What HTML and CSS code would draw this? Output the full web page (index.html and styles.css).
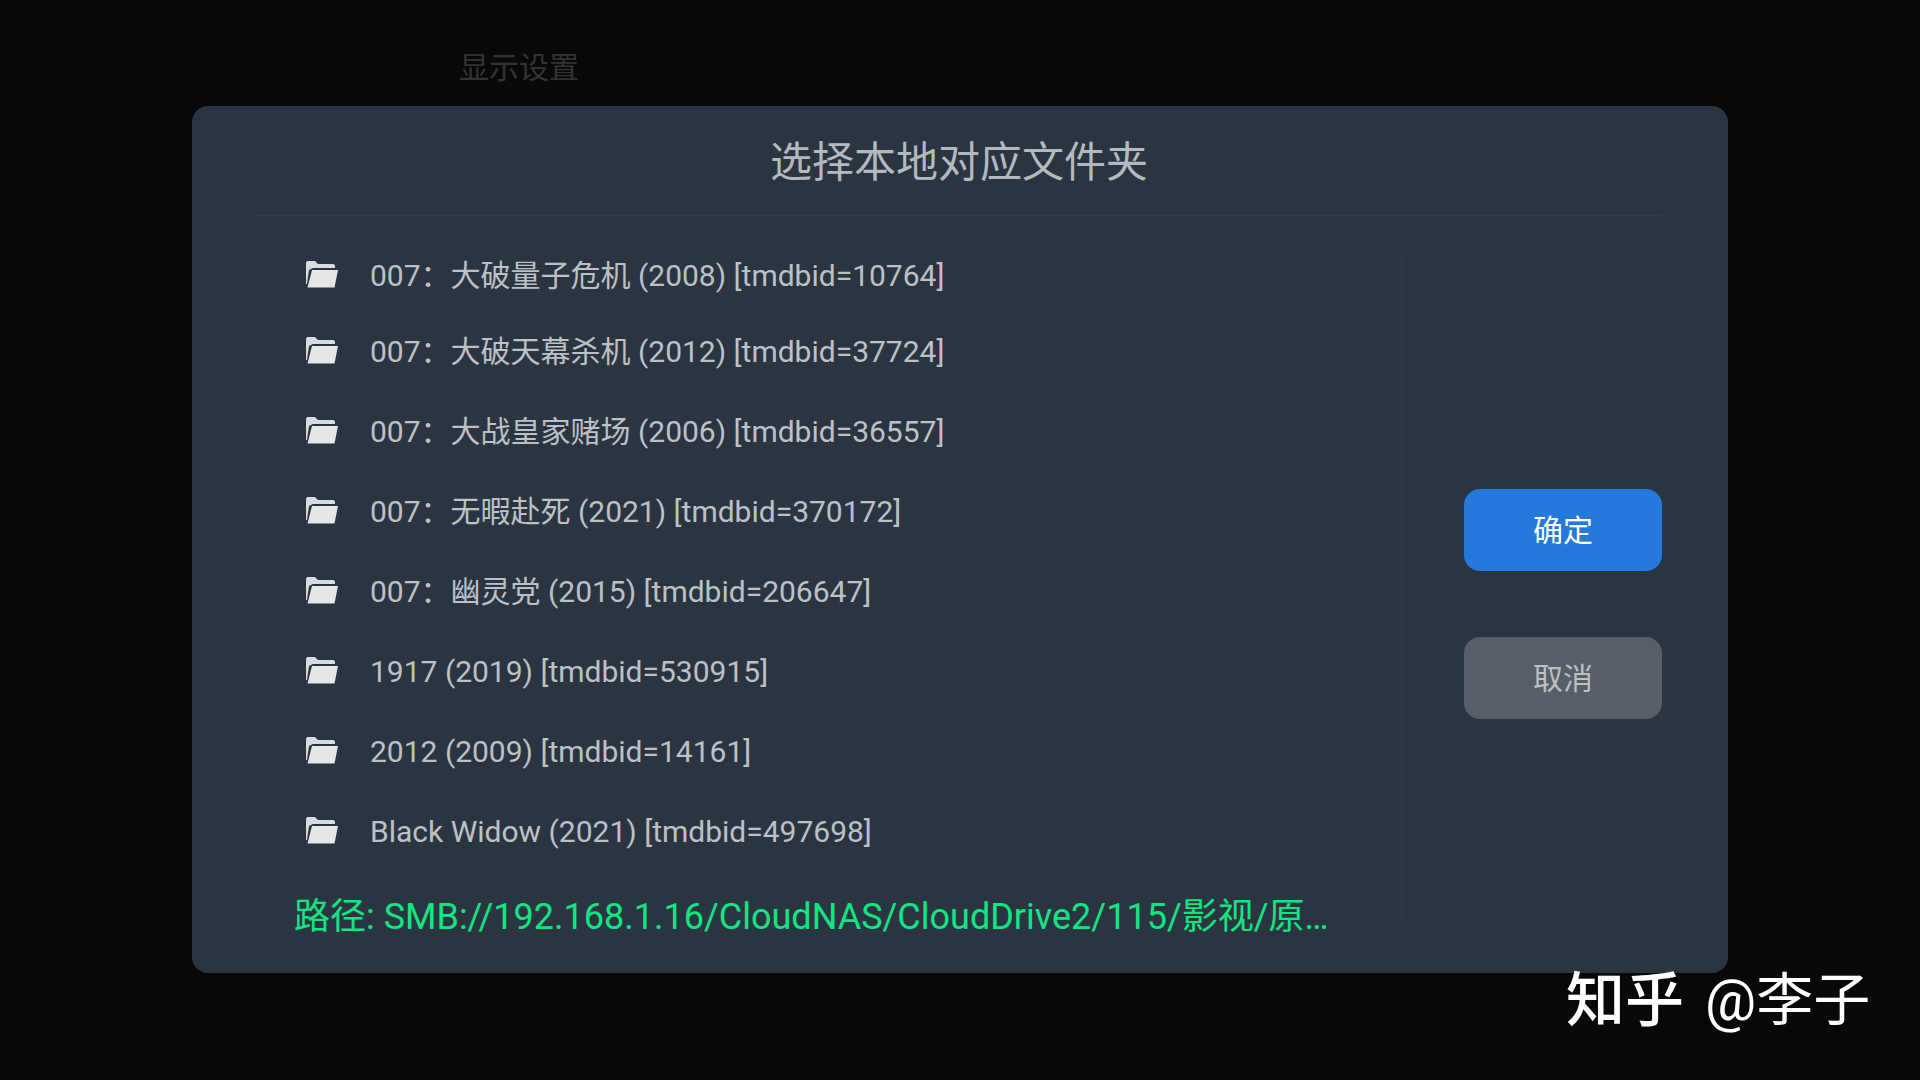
FILE: index.html
```html
<!DOCTYPE html>
<html lang="zh-CN">
<head>
<meta charset="UTF-8">
<title>选择本地对应文件夹</title>
<link rel="stylesheet" href="styles.css">
</head>
<body>
<p class="behind-title">显示设置</p>
<div class="dialog">
    <div class="behind-box"></div>
    <h1 class="dialog-title">选择本地对应文件夹</h1>
    <div class="dialog-body">
        <div class="browser">
            <ul class="folder-list">
                <li class="folder-row"><svg class="folder-icon" viewBox="0 0 32 28"><path class="folder-back" d="M0 3a2 2 0 0 1 2-2h7l3 3h15a2 2 0 0 1 2 2v2H7L3 10 1 24H0z"/><path class="folder-front" d="M6 10h26l-3.500 17.500H1.500z"/></svg><span class="folder-name">007：大破量子危机 (2008) [tmdbid=10764]</span></li>
                <li class="folder-row"><svg class="folder-icon" viewBox="0 0 32 28"><path class="folder-back" d="M0 3a2 2 0 0 1 2-2h7l3 3h15a2 2 0 0 1 2 2v2H7L3 10 1 24H0z"/><path class="folder-front" d="M6 10h26l-3.500 17.500H1.500z"/></svg><span class="folder-name">007：大破天幕杀机 (2012) [tmdbid=37724]</span></li>
                <li class="folder-row"><svg class="folder-icon" viewBox="0 0 32 28"><path class="folder-back" d="M0 3a2 2 0 0 1 2-2h7l3 3h15a2 2 0 0 1 2 2v2H7L3 10 1 24H0z"/><path class="folder-front" d="M6 10h26l-3.500 17.500H1.500z"/></svg><span class="folder-name">007：大战皇家赌场 (2006) [tmdbid=36557]</span></li>
                <li class="folder-row"><svg class="folder-icon" viewBox="0 0 32 28"><path class="folder-back" d="M0 3a2 2 0 0 1 2-2h7l3 3h15a2 2 0 0 1 2 2v2H7L3 10 1 24H0z"/><path class="folder-front" d="M6 10h26l-3.500 17.500H1.500z"/></svg><span class="folder-name">007：无暇赴死 (2021) [tmdbid=370172]</span></li>
                <li class="folder-row"><svg class="folder-icon" viewBox="0 0 32 28"><path class="folder-back" d="M0 3a2 2 0 0 1 2-2h7l3 3h15a2 2 0 0 1 2 2v2H7L3 10 1 24H0z"/><path class="folder-front" d="M6 10h26l-3.500 17.500H1.500z"/></svg><span class="folder-name">007：幽灵党 (2015) [tmdbid=206647]</span></li>
                <li class="folder-row"><svg class="folder-icon" viewBox="0 0 32 28"><path class="folder-back" d="M0 3a2 2 0 0 1 2-2h7l3 3h15a2 2 0 0 1 2 2v2H7L3 10 1 24H0z"/><path class="folder-front" d="M6 10h26l-3.500 17.500H1.500z"/></svg><span class="folder-name">1917 (2019) [tmdbid=530915]</span></li>
                <li class="folder-row"><svg class="folder-icon" viewBox="0 0 32 28"><path class="folder-back" d="M0 3a2 2 0 0 1 2-2h7l3 3h15a2 2 0 0 1 2 2v2H7L3 10 1 24H0z"/><path class="folder-front" d="M6 10h26l-3.500 17.500H1.500z"/></svg><span class="folder-name">2012 (2009) [tmdbid=14161]</span></li>
                <li class="folder-row"><svg class="folder-icon" viewBox="0 0 32 28"><path class="folder-back" d="M0 3a2 2 0 0 1 2-2h7l3 3h15a2 2 0 0 1 2 2v2H7L3 10 1 24H0z"/><path class="folder-front" d="M6 10h26l-3.500 17.500H1.500z"/></svg><span class="folder-name">Black Widow (2021) [tmdbid=497698]</span></li>
            </ul>
            <p class="path">路径: SMB://192.168.1.16/CloudNAS/CloudDrive2/115/影视/原…</p>
        </div>
        <div class="divider"></div>
        <div class="actions">
            <button class="btn btn-primary">确定</button>
            <button class="btn">取消</button>
        </div>
    </div>
</div>
<p class="watermark"><b>知乎</b><span>@李子</span></p>
</body>
</html>
```

FILE: styles.css
```css
* {
    box-sizing: border-box;
}
body {
    margin: 0;
    height: 100vh;
    padding-top: 106px;
    padding-left: 192px;
    overflow: hidden;
    background-color: #080808;
    font-family: Roboto, "Noto Sans CJK SC", sans-serif;
}
p, h1, ul {
    margin: 0;
    padding: 0;
}
.behind-title {
    position: absolute;
    left: 459px;
    top: 47px;
    font-size: 30px;
    line-height: 42px;
    color: #333333;
}
.dialog {
    position: relative;
    width: 1536px;
    height: 867px;
    padding: 0 66px 0 64px;
    background-color: #2b3541;
    border-radius: 16px;
}
/* faint outline of the page under the dialog */
.behind-box {
    position: absolute;
    left: 288px;
    top: 311px;
    width: 958px;
    height: 106px;
    border: 1px solid #2e3844;
}
.dialog-title {
    position: relative;
    height: 110px;
    padding-top: 3px;
    border-bottom: 1px solid #333d49;
    font-size: 42px;
    font-weight: 400;
    line-height: 108px;
    text-align: center;
    color: #b4b9be;
}
.dialog-body {
    position: relative;
    display: flex;
    height: 757px;
}
.browser {
    width: 1145px;
    padding-top: 23px;
}
.folder-list {
    list-style: none;
    padding-left: 50px;
}
.folder-row {
    display: flex;
    align-items: center;
    gap: 32px;
    height: 80px;
    font-size: 30px;
    line-height: 40px;
    color: #bcc1c6;
}
.folder-row:first-child {
    height: 72px;
}
.folder-icon {
    width: 32px;
    height: 28px;
    margin-top: -2px;
    flex-shrink: 0;
}
.folder-back {
    fill: #d8dcdf;
}
.folder-front {
    fill: #e6e6e6;
}
.folder-name {
    padding-top: 2px;
}
.path {
    margin-top: 22px;
    padding-left: 38px;
    font-size: 36px;
    line-height: 48px;
    white-space: nowrap;
    color: #12e582;
}
.divider {
    width: 1px;
    margin: 39px 0 53px;
    background-color: #323c48;
}
.actions {
    display: flex;
    flex-direction: column;
    gap: 66px;
    margin-left: 62px;
    padding-top: 273px;
}
.btn {
    width: 198px;
    height: 82px;
    padding-bottom: 6px;
    border: none;
    border-radius: 16px;
    background-color: #565e68;
    font-family: inherit;
    font-size: 30px;
    color: #bcc0c4;
}
.btn-primary {
    background-color: #2578dc;
    color: #ffffff;
}
.watermark {
    position: absolute;
    left: 1566px;
    top: 961px;
    display: flex;
    align-items: center;
    gap: 21px;
    font-size: 57px;
    line-height: 80px;
    white-space: nowrap;
    color: #ffffff;
}
.watermark b {
    font-size: 59px;
    font-weight: 500;
}
```
